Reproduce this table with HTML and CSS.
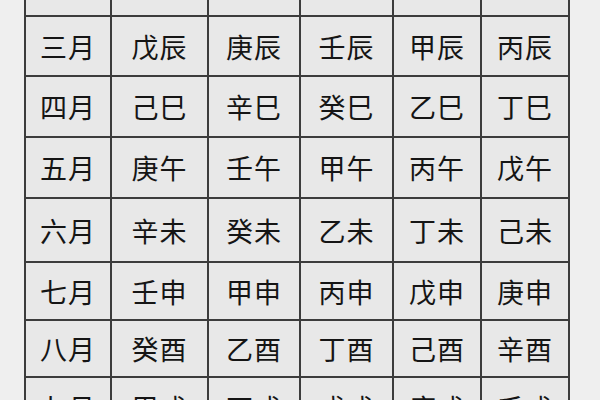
FILE: index.html
```html
<!DOCTYPE html>
<html lang="zh">
<head>
<meta charset="utf-8">
<link rel="stylesheet" href="styles.css">
</head>
<body>
<div class="table">
  <div class="cell">二月</div><div class="cell">丁卯</div><div class="cell">己卯</div><div class="cell">辛卯</div><div class="cell">癸卯</div><div class="cell">乙卯</div>
  <div class="cell">三月</div><div class="cell">戊辰</div><div class="cell">庚辰</div><div class="cell">壬辰</div><div class="cell">甲辰</div><div class="cell">丙辰</div>
  <div class="cell">四月</div><div class="cell">己巳</div><div class="cell">辛巳</div><div class="cell">癸巳</div><div class="cell">乙巳</div><div class="cell">丁巳</div>
  <div class="cell">五月</div><div class="cell">庚午</div><div class="cell">壬午</div><div class="cell">甲午</div><div class="cell">丙午</div><div class="cell">戊午</div>
  <div class="cell">六月</div><div class="cell">辛未</div><div class="cell">癸未</div><div class="cell">乙未</div><div class="cell">丁未</div><div class="cell">己未</div>
  <div class="cell">七月</div><div class="cell">壬申</div><div class="cell">甲申</div><div class="cell">丙申</div><div class="cell">戊申</div><div class="cell">庚申</div>
  <div class="cell">八月</div><div class="cell">癸酉</div><div class="cell">乙酉</div><div class="cell">丁酉</div><div class="cell">己酉</div><div class="cell">辛酉</div>
  <div class="cell">九月</div><div class="cell">甲戌</div><div class="cell">丙戌</div><div class="cell">戊戌</div><div class="cell">庚戌</div><div class="cell">壬戌</div>
</div>
</body>
</html>
```

FILE: styles.css
```css
html, body {
  margin: 0;
  padding: 0;
  background: #efefef;
  overflow: hidden;
  height: 400px;
}
.table {
  display: grid;
  grid-template-columns: 84px 95px 90px 91px 86px 86px;
  grid-template-rows: 59px 58px 59px 59px 62px 56px 55px 59px;
  gap: 2px;
  padding: 0 2px 2px 2px;
  width: max-content;
  margin: -44px 0 0 24px;
  background: #3c3c3c;
}
.cell {
  background: #e8e8e8;
  display: flex;
  align-items: center;
  justify-content: center;
  font-family: "Noto Sans CJK SC", "Noto Sans", sans-serif;
  font-size: 27px;
  color: #151515;
  letter-spacing: 1px;
}
```
